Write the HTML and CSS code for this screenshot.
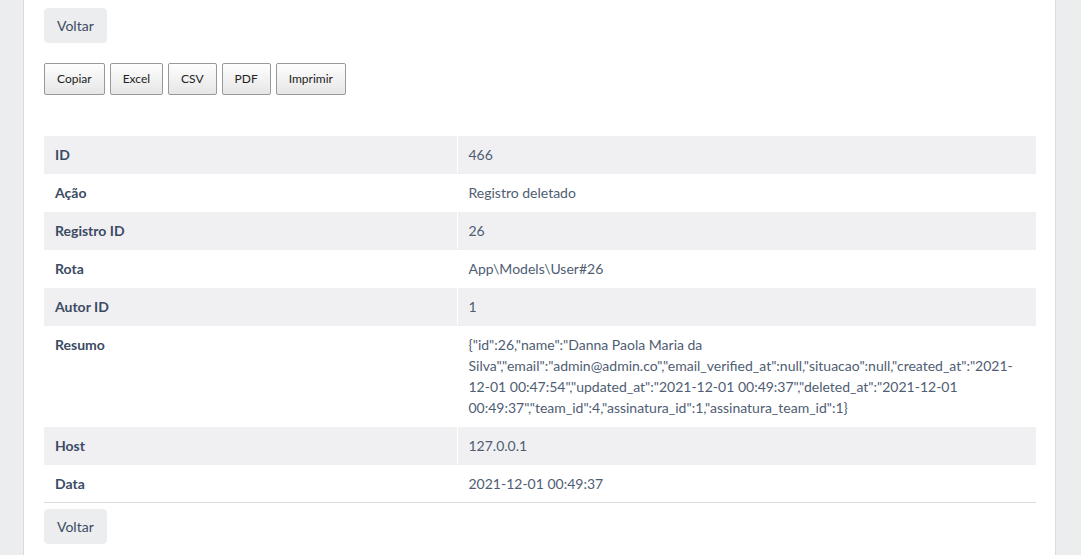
FILE: index.html
```html
<!DOCTYPE html>
<html lang="pt-BR">
<head>
<meta charset="utf-8">
<title>Auditoria</title>
<link rel="stylesheet" href="styles.css">
</head>
<body>
<div class="page">
  <div class="card">
    <div class="top-actions">
      <a class="btn btn-light" href="#">Voltar</a>
    </div>
    <div class="dt-buttons">
      <button class="dt-button">Copiar</button>
      <button class="dt-button">Excel</button>
      <button class="dt-button">CSV</button>
      <button class="dt-button">PDF</button>
      <button class="dt-button">Imprimir</button>
    </div>
    <table class="detail-table">
      <tbody>
        <tr><th>ID</th><td>466</td></tr>
        <tr><th>Ação</th><td>Registro deletado</td></tr>
        <tr><th>Registro ID</th><td>26</td></tr>
        <tr><th>Rota</th><td>App\Models\User#26</td></tr>
        <tr><th>Autor ID</th><td>1</td></tr>
        <tr><th>Resumo</th><td class="json">{"id":26,"name":"Danna Paola Maria da Silva","email":"admin@admin.co","email_verified_at":null,"situacao":null,"created_at":"2021-12-01 00:47:54","updated_at":"2021-12-01 00:49:37","deleted_at":"2021-12-01 00:49:37","team_id":4,"assinatura_id":1,"assinatura_team_id":1}</td></tr>
        <tr><th>Host</th><td>127.0.0.1</td></tr>
        <tr><th>Data</th><td>2021-12-01 00:49:37</td></tr>
      </tbody>
    </table>
    <div class="bottom-actions">
      <a class="btn btn-light" href="#">Voltar</a>
    </div>
  </div>
</div>
</body>
</html>
```

FILE: styles.css
```css
* { box-sizing: border-box; }
html, body { margin: 0; padding: 0; }
body {
  background: #ebedef;
  font-family: "Lato", "Liberation Sans", sans-serif;
  font-size: 14px;
  line-height: 1.5;
  color: #3c4b64;
}
.page {
  padding: 0 25px 0 23px;
  min-height: 100vh;
  display: flex;
}
.card {
  flex: 1;
  background: #fff;
  border-left: 1px solid #d8dbe0;
  border-right: 1px solid #d8dbe0;
  padding: 8px 19px 30px 20px;
}
.btn {
  display: inline-block;
  text-decoration: none;
  font-size: 14px;
  line-height: 21px;
  padding: 6px 12px;
  border-radius: 4px;
  border: 1px solid transparent;
}
.btn-light {
  background: #ebedef;
  color: #3c4b64;
  border-color: #ebedef;
}
.dt-buttons {
  display: flex;
  gap: 5px;
  margin-top: 20px;
}
.dt-button {
  font-family: inherit;
  font-size: 12px;
  line-height: 18px;
  padding: 6px 12px;
  color: #222;
  border: 1px solid #999;
  border-radius: 2px;
  background: linear-gradient(to bottom, #fefefe 0%, #e6e6e6 100%);
  cursor: pointer;
}
.detail-table {
  width: 100%;
  border-collapse: collapse;
  margin-top: 41px;
}
.detail-table th,
.detail-table td {
  text-align: left;
  vertical-align: top;
  padding: 8px 11px;
  line-height: 21px;
  border-bottom: 1px solid transparent;
}
.detail-table th {
  width: 413px;
  font-weight: 700;
  color: #3c4b64;
}
.detail-table td {
  color: #4f5d73;
  border-left: 1px solid #fff;
}
.detail-table tr:nth-child(odd) th,
.detail-table tr:nth-child(odd) td {
  background: #f0f0f2;
}
.detail-table tr:last-child th,
.detail-table tr:last-child td {
  border-bottom: 1px solid #d8dbe0;
}
.json { word-break: normal; }
.bottom-actions { margin-top: 6px; }
```
